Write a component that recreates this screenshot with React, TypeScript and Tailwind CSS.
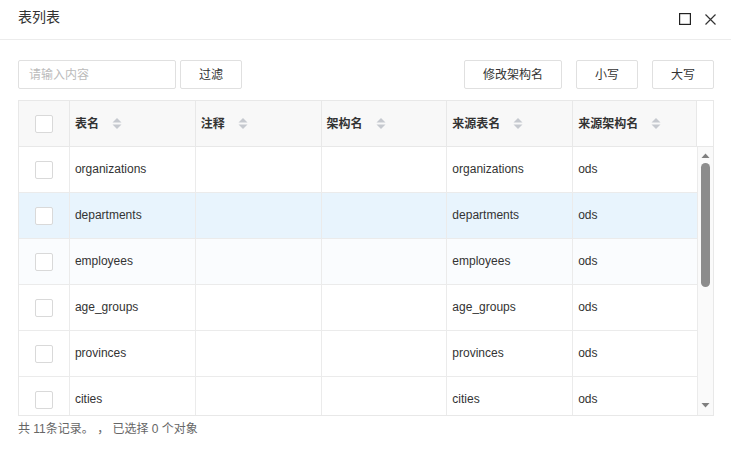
import React from 'react';

const font = { fontFamily: '"Liberation Sans", "Noto Sans CJK SC", sans-serif' };

const columns = [
  { key: 'name', title: '表名', width: 'w-[126px]' },
  { key: 'comment', title: '注释', width: 'w-[126px]' },
  { key: 'schema', title: '架构名', width: 'w-[126px]' },
  { key: 'source', title: '来源表名', width: 'w-[126px]' },
  { key: 'sourceSchema', title: '来源架构名', width: 'w-[124px]' },
];

const rows = [
  { name: 'organizations', comment: '', schema: '', source: 'organizations', sourceSchema: 'ods' },
  { name: 'departments', comment: '', schema: '', source: 'departments', sourceSchema: 'ods' },
  { name: 'employees', comment: '', schema: '', source: 'employees', sourceSchema: 'ods' },
  { name: 'age_groups', comment: '', schema: '', source: 'age_groups', sourceSchema: 'ods' },
  { name: 'provinces', comment: '', schema: '', source: 'provinces', sourceSchema: 'ods' },
  { name: 'cities', comment: '', schema: '', source: 'cities', sourceSchema: 'ods' },
];

function SortIcon() {
  return (
    <svg width="10" height="13" viewBox="0 0 10 13" className="ml-[13px] shrink-0">
      <path d="M5 1 L9.5 5.5 H0.5 Z" fill="#c6c9cf" />
      <path d="M5 12 L9.5 7.5 H0.5 Z" fill="#c6c9cf" />
    </svg>
  );
}

function Checkbox() {
  return <span className="block w-[18px] h-[18px] bg-white border border-[#d9d9d9] rounded-[2px]" />;
}

function Button({ children, className = '' }: { children: React.ReactNode; className?: string }) {
  return (
    <button
      className={`h-[29px] bg-white border border-[#e0e0e0] rounded-[2px] text-[12px] text-[#333] ${className}`}
    >
      {children}
    </button>
  );
}

export default function App() {
  return (
    <div className="w-[731px] h-[456px] bg-white text-[#333] overflow-hidden" style={font}>
      {/* Title bar */}
      <div className="h-[40px] flex items-center justify-between pl-[18px] pr-[15px] border-b border-[#ececec]">
        <span className="text-[14px] text-[#333] -mt-[5px]">表列表</span>
        <div className="flex items-center gap-[14px] -mt-[1px]">
          <svg width="12" height="12" viewBox="0 0 12 12">
            <rect x="0.6" y="0.6" width="10.8" height="10.8" fill="none" stroke="#222" strokeWidth="1.2" />
          </svg>
          <svg width="11" height="11" viewBox="0 0 11 11">
            <path d="M0.5 0.5 L10.5 10.5 M10.5 0.5 L0.5 10.5" stroke="#333" strokeWidth="1.2" />
          </svg>
        </div>
      </div>

      {/* Toolbar */}
      <div className="flex items-center pl-[18px] pr-[17px] mt-[20px]">
        <div className="w-[158px] h-[29px] border border-[#e0e0e0] rounded-[2px] flex items-center pl-[10px] text-[12px] text-[#bbb]">
          请输入内容
        </div>
        <Button className="w-[62px] ml-[4px]">过滤</Button>
        <div className="flex-1" />
        <Button className="w-[98px]">修改架构名</Button>
        <Button className="w-[62px] ml-[14px]">小写</Button>
        <Button className="w-[62px] ml-[14px]">大写</Button>
      </div>

      {/* Table */}
      <div className="ml-[18px] mt-[11px] w-[696px] border border-[#e8e8e8] text-[12px]">
        <div className="flex h-[46px] bg-[#f8f8f8] border-b border-[#e8e8e8]">
          <div className="w-[51px] border-r border-[#e8e8e8] flex items-center justify-center">
            <Checkbox />
          </div>
          {columns.map((c) => (
            <div
              key={c.key}
              className={`${c.width} border-r border-[#e8e8e8] flex items-center pl-[5px] font-bold text-[#333]`}
            >
              {c.title}
              <SortIcon />
            </div>
          ))}
          <div className="w-[16px] bg-white" />
        </div>

        <div className="flex h-[268px]">
          <div className="w-[678px] overflow-hidden">
            {rows.map((r, i) => (
              <div
                key={r.name}
                className={`flex h-[46px] shrink-0 border-b border-[#ebebeb] ${
                  i === 1 ? 'bg-[#e8f4fd]' : i === 2 ? 'bg-[#fafcfe]' : 'bg-white'
                }`}
              >
                <div className="w-[51px] border-r border-[#ebebeb] flex items-center justify-center">
                  <Checkbox />
                </div>
                {columns.map((c) => (
                  <div
                    key={c.key}
                    className={`${c.width} border-r border-[#ebebeb] flex items-center pl-[5px] pb-[2px] text-[#333] last:border-r-0`}
                  >
                    {(r as Record<string, string>)[c.key]}
                  </div>
                ))}
              </div>
            ))}
          </div>
          {/* Scrollbar */}
          <div className="w-[16px] bg-[#fafafa] border-l border-[#ebebeb] flex flex-col items-center">
            <svg width="9" height="6" viewBox="0 0 9 6" className="mt-[6px]">
              <path d="M4.5 0.5 L8.5 5 H0.5 Z" fill="#7f7f7f" />
            </svg>
            <div className="w-[9px] h-[124px] mt-[4px] bg-[#8c8c8c] rounded-full" />
            <div className="flex-1" />
            <svg width="9" height="6" viewBox="0 0 9 6" className="mb-[7px]">
              <path d="M4.5 5.5 L8.5 1 H0.5 Z" fill="#7f7f7f" />
            </svg>
          </div>
        </div>
      </div>

      <div className="pl-[18px] mt-[4px] text-[12px] text-[#666]">共 11条记录。 ， 已选择 0 个对象</div>
    </div>
  );
}
